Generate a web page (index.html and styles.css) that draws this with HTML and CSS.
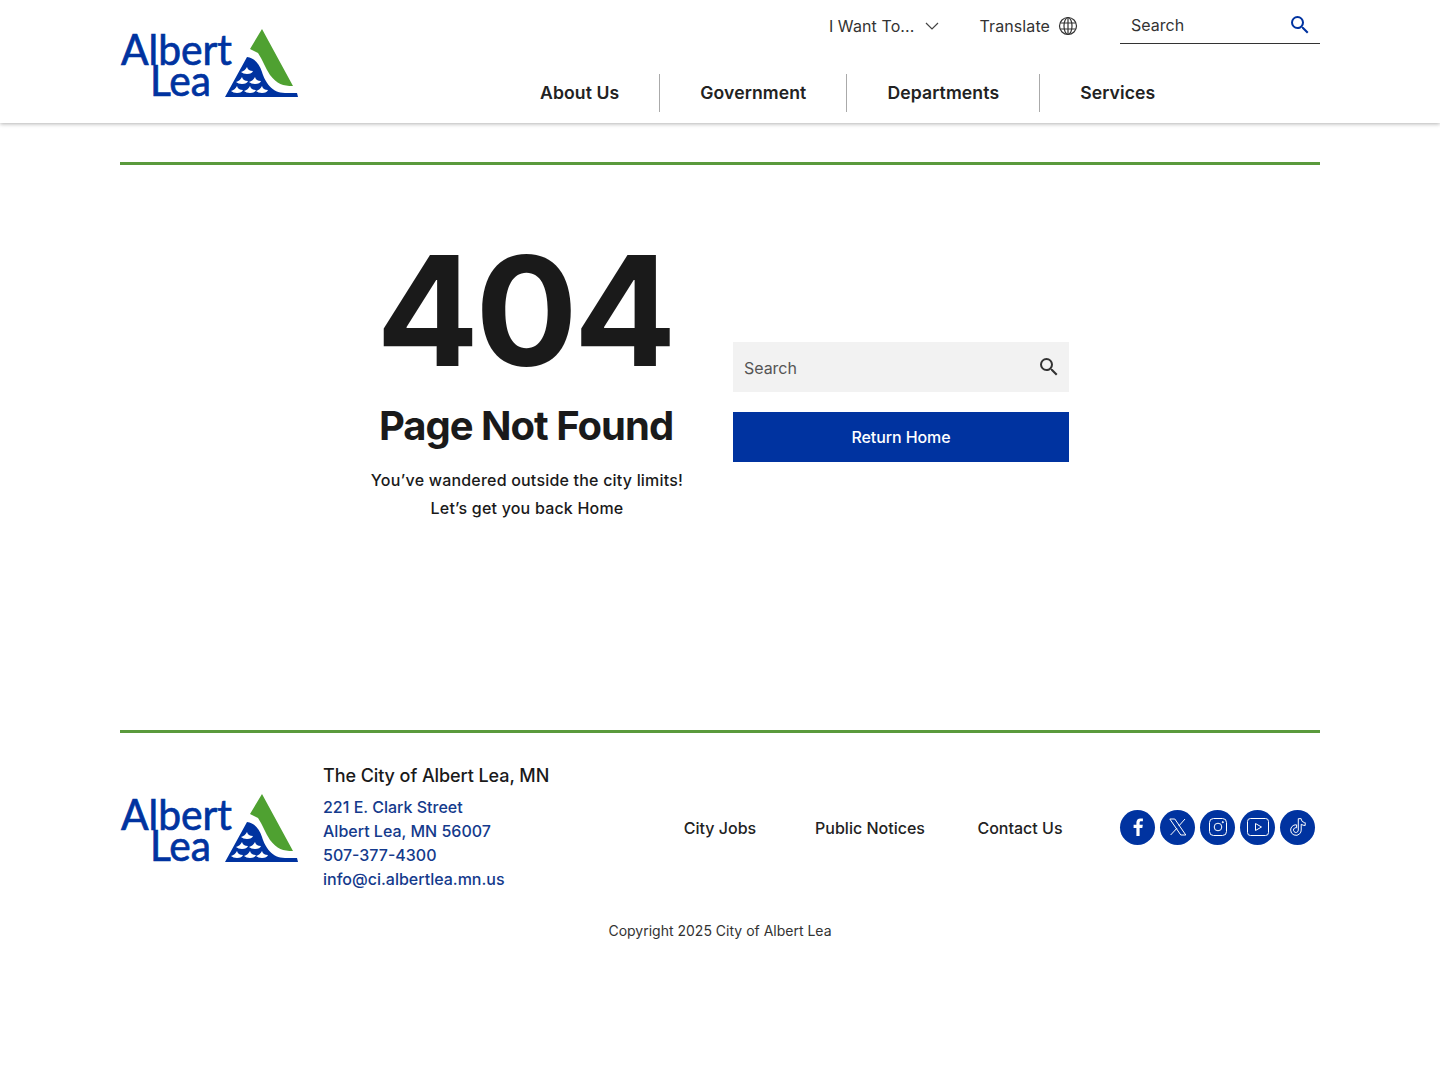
FILE: index.html
```html
<!DOCTYPE html>
<html lang="en">
<head>
    <meta charset="UTF-8">
    <meta name="viewport" content="width=device-width, initial-scale=1.0">
    <title>Page Not Found - City of Albert Lea</title>
    <link rel="stylesheet" href="styles.css">
</head>
<body>
    <header class="site-header">
        <div class="header-inner">
            <a class="logo" href="#">
                <svg width="178" height="70" viewBox="0 0 178 70">
                    <text class="logo-text" x="1" y="37" font-size="42" textLength="111" lengthAdjust="spacingAndGlyphs">Albert</text>
                    <text class="logo-text" x="30" y="68" font-size="42" textLength="61" lengthAdjust="spacingAndGlyphs">Lea</text>
                    <path fill="#4fa131" d="M142 1 L173 58 C163 58 157 56 150 47 C145 40 143 32 138 25 L130 21 Z"/>
                    <path fill="#0033a0" d="M127 29 C134 30 139 35 142 44 C145 54 152 65 165 65 L177 65 L178 69 L105 69 Z"/>
                    <path fill="#fff" d="M121 44 q4-1 6-5 q1 4 6 4 q-1 3-6 3 q-4 0-6-2z M116 54 q4-1 6-5 q1 4 6 4 q-1 3-6 3 q-4 0-6-2z M129 54 q4-1 6-5 q1 4 6 4 q-1 3-6 3 q-4 0-6-2z M111 63 q4-1 6-5 q1 4 6 4 q-1 3-6 3 q-4 0-6-2z M124 63 q4-1 6-5 q1 4 6 4 q-1 3-6 3 q-4 0-6-2z M136 63 q4-1 6-5 q1 4 6 4 q-1 3-6 3 q-4 0-6-2z"/>
                </svg>
            </a>
            <div class="header-right">
                <div class="utility">
                    <a class="utility-link want" href="#">I Want To...
                        <svg width="14" height="8" viewBox="0 0 14 8" fill="none" stroke="#444" stroke-width="1.2"><path d="M1 1l6 6 6-6"/></svg>
                    </a>
                    <a class="utility-link translate" href="#">Translate
                        <svg width="20" height="20" viewBox="0 0 20 20" fill="none" stroke="#333" stroke-width="1.2"><circle cx="10" cy="10" r="8.5"/><ellipse cx="10" cy="10" rx="4" ry="8.5"/><path d="M10 1.5v17M2.3 7h15.4M2.3 13h15.4"/></svg>
                    </a>
                    <div class="top-search">
                        <span>Search</span>
                        <svg width="24" height="24" viewBox="0 0 24 24" fill="#0033a0"><path d="M15.5 14h-.79l-.28-.27A6.47 6.47 0 0 0 16 9.5 6.5 6.5 0 1 0 9.5 16c1.61 0 3.09-.59 4.23-1.57l.27.28v.79l5 4.99L20.49 19l-4.99-5zm-6 0C7.01 14 5 11.99 5 9.5S7.01 5 9.5 5 14 7.01 14 9.5 11.99 14 9.5 14z"/></svg>
                    </div>
                </div>
                <nav class="main-nav">
                    <a href="#">About Us</a>
                    <a href="#">Government</a>
                    <a href="#">Departments</a>
                    <a href="#">Services</a>
                </nav>
            </div>
        </div>
    </header>

    <main class="container">
        <div class="not-found">
            <div class="message">
                <h1>404</h1>
                <h2>Page Not Found</h2>
                <p>You’ve wandered outside the city limits!</p>
                <p>Let’s get you back Home</p>
            </div>
            <div class="actions">
                <div class="big-search">
                    <span>Search</span>
                    <svg width="24" height="24" viewBox="0 0 24 24" fill="#333"><path d="M15.5 14h-.79l-.28-.27A6.47 6.47 0 0 0 16 9.5 6.5 6.5 0 1 0 9.5 16c1.61 0 3.09-.59 4.23-1.57l.27.28v.79l5 4.99L20.49 19l-4.99-5zm-6 0C7.01 14 5 11.99 5 9.5S7.01 5 9.5 5 14 7.01 14 9.5 11.99 14 9.5 14z"/></svg>
                </div>
                <a class="home-btn" href="#">Return Home</a>
            </div>
        </div>
    </main>

    <footer class="container site-footer">
        <div class="footer-row">
            <a class="logo" href="#">
                <svg width="178" height="70" viewBox="0 0 178 70">
                    <text class="logo-text" x="1" y="37" font-size="42" textLength="111" lengthAdjust="spacingAndGlyphs">Albert</text>
                    <text class="logo-text" x="30" y="68" font-size="42" textLength="61" lengthAdjust="spacingAndGlyphs">Lea</text>
                    <path fill="#4fa131" d="M142 1 L173 58 C163 58 157 56 150 47 C145 40 143 32 138 25 L130 21 Z"/>
                    <path fill="#0033a0" d="M127 29 C134 30 139 35 142 44 C145 54 152 65 165 65 L177 65 L178 69 L105 69 Z"/>
                    <path fill="#fff" d="M121 44 q4-1 6-5 q1 4 6 4 q-1 3-6 3 q-4 0-6-2z M116 54 q4-1 6-5 q1 4 6 4 q-1 3-6 3 q-4 0-6-2z M129 54 q4-1 6-5 q1 4 6 4 q-1 3-6 3 q-4 0-6-2z M111 63 q4-1 6-5 q1 4 6 4 q-1 3-6 3 q-4 0-6-2z M124 63 q4-1 6-5 q1 4 6 4 q-1 3-6 3 q-4 0-6-2z M136 63 q4-1 6-5 q1 4 6 4 q-1 3-6 3 q-4 0-6-2z"/>
                </svg>
            </a>
            <div class="address">
                <h3>The City of Albert Lea, MN</h3>
                <a href="#">221 E. Clark Street</a>
                <a href="#">Albert Lea, MN 56007</a>
                <a href="#">507-377-4300</a>
                <a href="#">info@ci.albertlea.mn.us</a>
            </div>
            <div class="footer-links">
                <a href="#">City Jobs</a>
                <a href="#">Public Notices</a>
                <a href="#">Contact Us</a>
            </div>
            <div class="social">
                <a href="#"><svg width="20" height="20" viewBox="0 0 20 20" fill="#fff"><path d="M11.6 19v-8h2.7l.5-3.2h-3.2V5.9c0-.9.3-1.6 1.6-1.6h1.7V1.5c-.3 0-1.3-.1-2.4-.1-2.5 0-4.1 1.5-4.1 4.2v2.2H5.6V11h2.8v8z"/></svg></a>
                <a href="#"><svg width="20" height="20" viewBox="0 0 20 20" fill="none" stroke="#fff" stroke-width="1"><path d="M1.8 2h5l11 16h-5zM17 2l-6.2 7M9 11.2L2.6 18"/></svg></a>
                <a href="#"><svg width="20" height="20" viewBox="0 0 20 20" fill="none" stroke="#fff" stroke-width="1"><rect x="1.5" y="1.5" width="17" height="17" rx="4"/><circle cx="10" cy="10" r="3.8"/><circle cx="14.8" cy="5.2" r=".6" fill="#fff"/></svg></a>
                <a href="#"><svg width="24" height="20" viewBox="0 0 24 20" fill="none" stroke="#fff" stroke-width="1"><rect x="1.5" y="1.5" width="21" height="17" rx="3"/><path d="M9.5 6.5l6 3.5-6 3.5z"/></svg></a>
                <a href="#"><svg width="20" height="20" viewBox="0 0 24 24" fill="none" stroke="#fff" stroke-width="1.2"><path d="M19.59 6.69a4.83 4.83 0 0 1-3.77-4.25V2h-3.45v13.67a2.89 2.89 0 0 1-5.2 1.74 2.89 2.89 0 0 1 2.31-4.64c.3 0 .59.05.86.13v-3.5a6.37 6.37 0 0 0-.86-.05A6.34 6.34 0 0 0 3.15 15.7a6.34 6.34 0 0 0 10.86 4.43 6.3 6.3 0 0 0 1.85-4.43V8.71a8.2 8.2 0 0 0 4.77 1.52V6.8a4.85 4.85 0 0 1-1.04-.11z"/></svg></a>
            </div>
        </div>
        <p class="copyright">Copyright 2025 City of Albert Lea</p>
    </footer>
</body>
</html>
```

FILE: styles.css
```css
* {
    box-sizing: border-box;
}

body {
    margin: 0;
    font-family: Inter, "Liberation Sans", sans-serif;
    font-optical-sizing: none;
    color: #1a1a1a;
    background-color: #fff;
}

a {
    color: inherit;
    text-decoration: none;
}

.logo {
    display: block;
    flex: none;
}

.logo svg {
    display: block;
    overflow: visible;
}

.logo-text {
    font-family: Lato, sans-serif;
    fill: #0033a0;
    stroke: #0033a0;
    stroke-width: 0.7;
}

.container {
    width: 1200px;
    margin: 0 auto;
}

/* header */
.site-header {
    height: 123px;
    background-color: #fff;
    box-shadow: 0 1px 4px rgba(0, 0, 0, 0.3);
}

.header-inner {
    width: 1200px;
    height: 100%;
    margin: 0 auto;
    display: flex;
    justify-content: space-between;
    padding-top: 28px;
}

.header-right {
    width: 780px;
    margin-top: -28px;
    display: flex;
    flex-direction: column;
    align-items: flex-end;
}

.utility {
    display: flex;
    align-items: center;
    height: 44px;
    padding-top: 8px;
}

.utility-link {
    display: flex;
    align-items: center;
    font-size: 16px;
    letter-spacing: 0.1px;
    color: #333;
}

.want {
    gap: 10px;
    margin-right: 41px;
}

.translate {
    gap: 8px;
    margin-right: 42px;
}

.top-search {
    width: 200px;
    height: 36px;
    padding: 0 8px 1px 11px;
    display: flex;
    align-items: center;
    justify-content: space-between;
    border-bottom: 1px solid #333;
    font-size: 16px;
    color: #333;
}

.main-nav {
    display: flex;
    align-self: flex-start;
    margin-top: 30px;
}

.main-nav a {
    height: 38px;
    padding: 0 40px 1px;
    display: flex;
    align-items: center;
    font-size: 17.6px;
    font-weight: 600;
    letter-spacing: 0.1px;
    color: #222;
    border-right: 1px solid #aaa;
}

.main-nav a:first-child {
    padding-left: 0;
}

.main-nav a:last-child {
    border-right: none;
}

/* 404 block */
main.container {
    margin-top: 39px;
    height: 568px;
    border-top: 3px solid #5a9a3c;
    padding-top: 66px;
}

.not-found {
    display: flex;
    justify-content: center;
    gap: 50px;
}

.message {
    width: 312px;
    text-align: center;
    display: flex;
    flex-direction: column;
    align-items: center;
}

.message h1 {
    margin: 0 5px 0 0;
    font-size: 152px;
    font-weight: 700;
    letter-spacing: -0.025em;
    line-height: 160px;
    white-space: nowrap;
}

.message h2 {
    margin: 12px 2px 17px 0;
    font-size: 40px;
    font-weight: 700;
    letter-spacing: -0.025em;
    line-height: 46px;
    white-space: nowrap;
}

.message p {
    margin: 0;
    font-size: 16px;
    font-weight: 500;
    letter-spacing: 0.2px;
    line-height: 28px;
    white-space: nowrap;
}

.actions {
    width: 336px;
    padding-top: 111px;
    display: flex;
    flex-direction: column;
    gap: 20px;
}

.big-search {
    height: 50px;
    padding: 0 8px 0 11px;
    display: flex;
    align-items: center;
    justify-content: space-between;
    background-color: #f2f2f2;
    font-size: 16px;
    color: #555;
}

.big-search span {
    padding-top: 2px;
    letter-spacing: -0.05px;
}

.home-btn {
    height: 50px;
    display: flex;
    align-items: center;
    justify-content: center;
    background-color: #0033a0;
    color: #fff;
    font-size: 16px;
    font-weight: 500;
    letter-spacing: -0.1px;
}

/* footer */
.site-footer {
    border-top: 3px solid #5a9a3c;
    padding-top: 30px;
}

.footer-row {
    display: flex;
    align-items: center;
}

.address {
    margin-left: 25px;
    width: 322px;
    flex: none;
    padding-bottom: 2px;
    display: flex;
    flex-direction: column;
}

.address h3 {
    margin: 0 0 6px;
    font-size: 18px;
    font-weight: 500;
    letter-spacing: -0.08px;
    line-height: 26px;
}

.address a {
    font-size: 16px;
    font-weight: 500;
    line-height: 24px;
    color: #143a8c;
}

.footer-links {
    display: grid;
    grid-template-columns: repeat(3, 150px);
    text-align: center;
    font-size: 16px;
    font-weight: 500;
    color: #222;
}

.social {
    margin-left: 25px;
    margin-bottom: 2px;
    display: flex;
    gap: 5px;
}

.social a {
    width: 35px;
    height: 35px;
    display: flex;
    align-items: center;
    justify-content: center;
    border-radius: 50%;
    background-color: #0033a0;
}

.copyright {
    margin: 29px 0 0;
    text-align: center;
    font-size: 14px;
    color: #333;
}
```
